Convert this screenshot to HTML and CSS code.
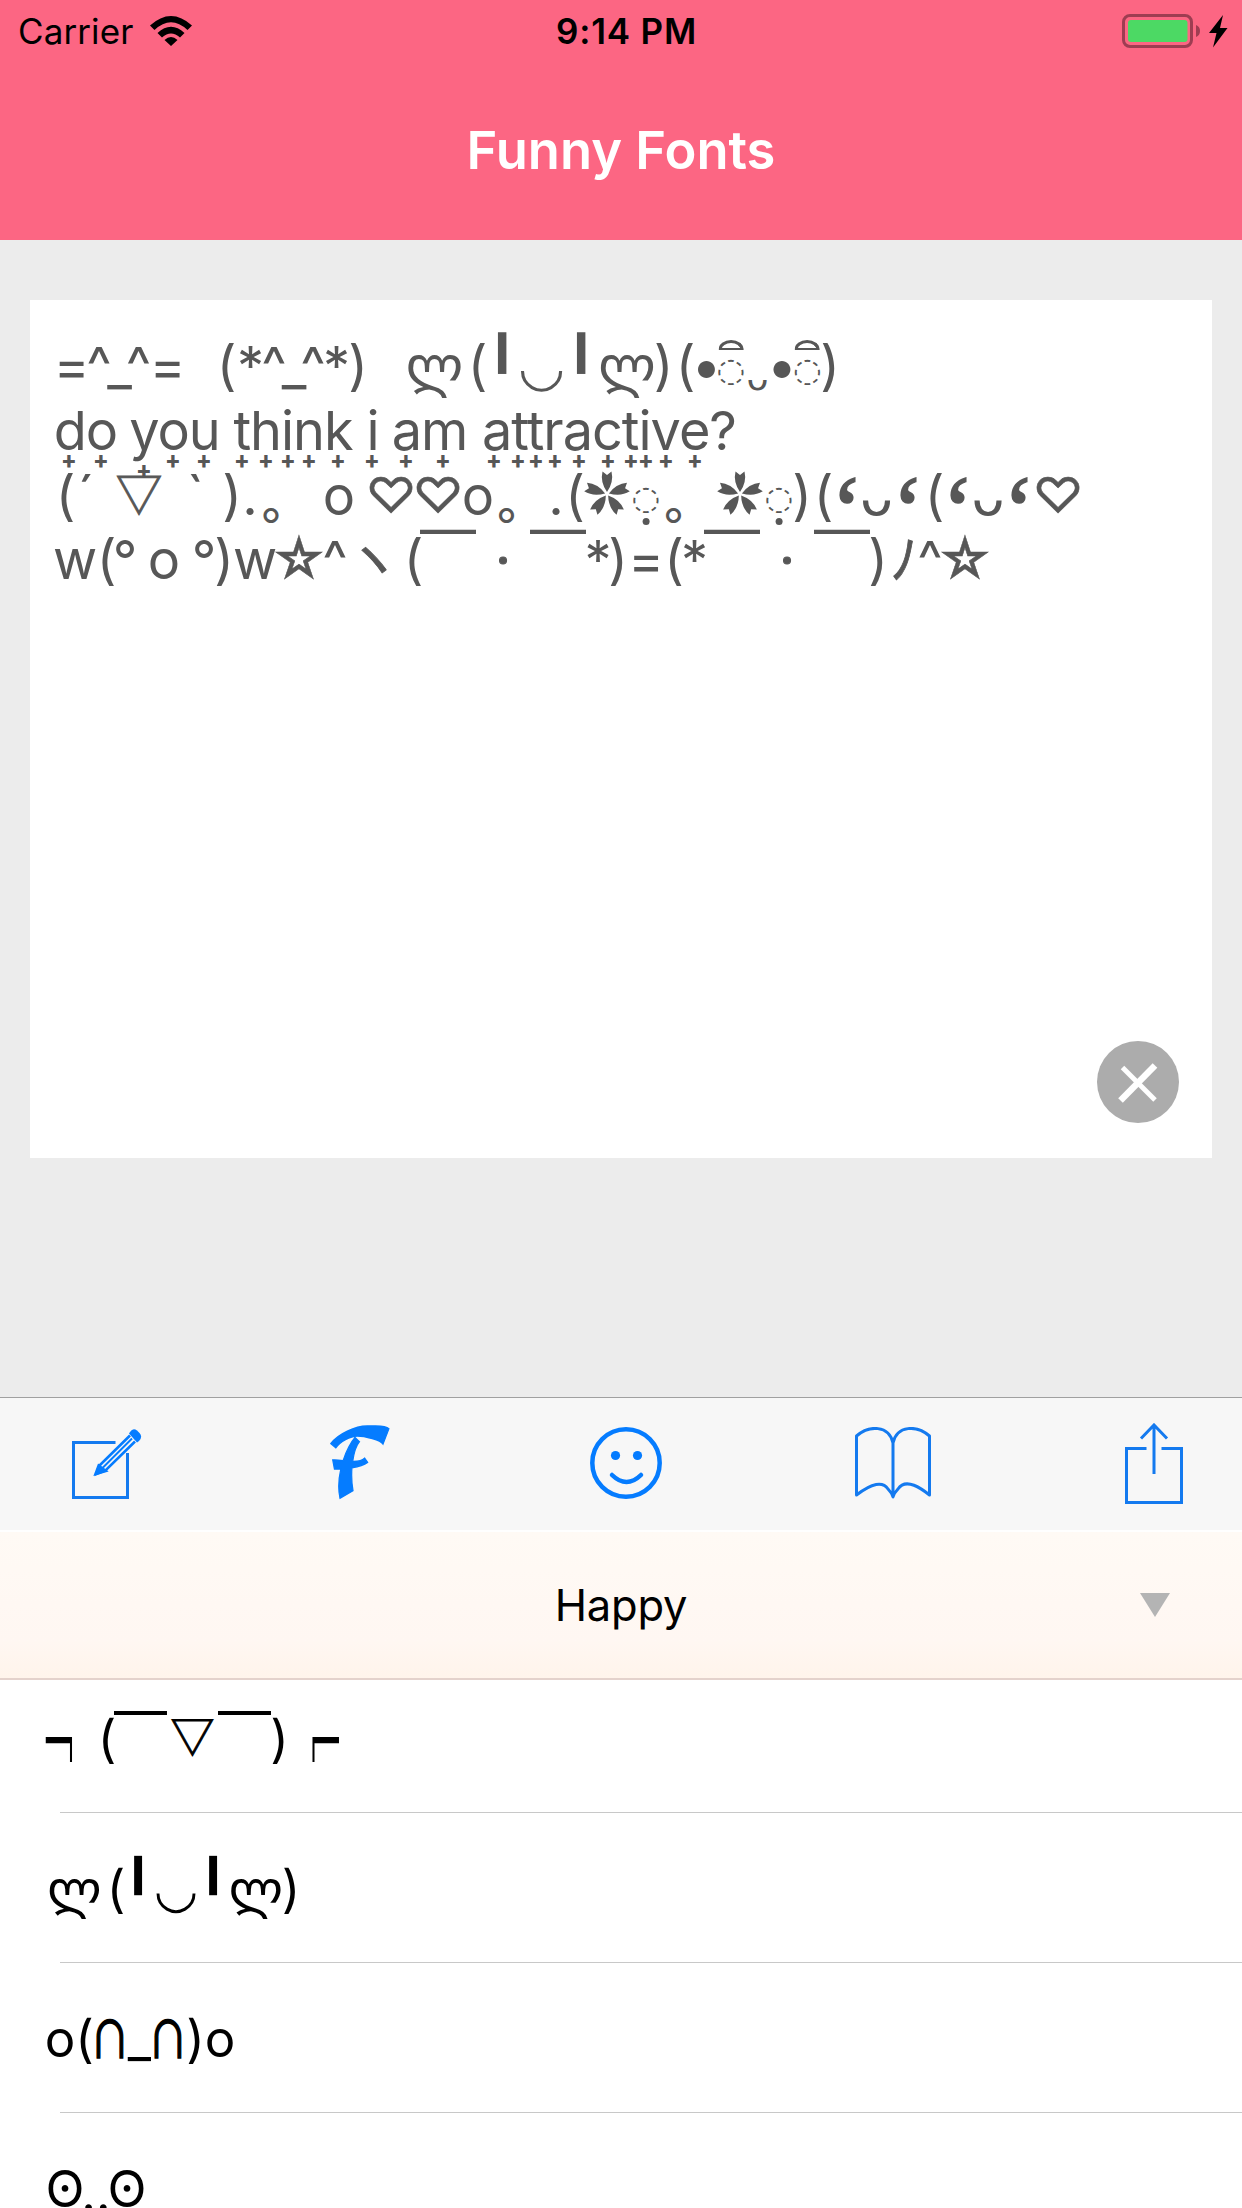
FILE: index.html
```html
<!DOCTYPE html>
<html lang="en">
<head>
<meta charset="utf-8">
<title>Funny Fonts</title>
<link rel="stylesheet" href="styles.css">
</head>
<body>
<header class="top">
  <div class="status">
    <div class="carrier"><span>Carrier</span>
      <svg class="wifi" viewBox="0 0 42 30"><path d="M0 9.500Q21-9.500 42 9.500L37.500 14Q21-1.500 4.500 14ZM7.500 17Q21 4.500 34.500 17L30 21.500Q21 13.500 12 21.500ZM14.500 24Q21 18 27.500 24L21 30Z"/></svg>
    </div>
    <div class="time">9:14 PM</div>
    <svg class="battery" viewBox="0 0 108 34"><rect x="1.500" y="1.500" width="68" height="31" rx="6.500" fill="none" stroke="#9e3d52" stroke-width="3"/><rect x="6" y="6" width="59.500" height="22" rx="3" fill="#4cd964"/><path d="M74 11q4 1.500 4 6t-4 6z" fill="#9e3d52"/><path d="M101 1L87 19h7.500L91 33.500 105.500 14H98Z"/></svg>
  </div>
  <h1 class="title">Funny Fonts</h1>
</header>
<main class="stage">
  <section class="editor">
    <div class="line l1"><span>=</span><span>^</span><span>_</span><span>^</span><span>=</span><span>(</span><span>*</span><span>^</span><span>_</span><span>^</span><span>*</span><span>)</span><span class="geo">ლ</span><span>(</span><span class="bar">╹</span><span class="smile">◡</span><span class="bar">╹</span><span class="geo">ლ</span><span>)</span><span>(</span><span class="dot">•</span><span class="ring hat">◌</span><span class="lip">ᴗ</span><span class="dot">•</span><span class="ring hat">◌</span><span>)</span></div>
    <div class="line words"><span>do</span><span>you</span><span>think</span><span>i</span><span>am</span><span>attractive?</span></div>
    <div class="line marks"><span>+</span><span>+</span><span class="low">+</span><span>+</span><span>+</span><span>+</span><span>+</span><span>+</span><span>+</span><span>+</span><span>+</span><span>+</span><span>+</span><span>+</span><span>+</span><span>+</span><span>+</span><span>+</span><span>+</span><span>+</span><span>+</span><span>+</span><span>+</span></div>
    <div class="line l3"><span>(</span><span>´</span><span class="tri">▽</span><span>`</span><span>)</span><span>.</span><span class="maru">◦</span><span>o</span><span class="heart">♡</span><span class="heart">♡</span><span>o</span><span class="maru">◦</span><span>.</span><span>(</span><svg class="flower" viewBox="-23 -23 46 46"><use href="#petal"/><use href="#petal" transform="rotate(72)"/><use href="#petal" transform="rotate(144)"/><use href="#petal" transform="rotate(216)"/><use href="#petal" transform="rotate(288)"/></svg><span class="ring under">◌</span><span class="maru">◦</span><svg class="flower" viewBox="-23 -23 46 46"><defs><path id="petal" d="M0-2Q-7-12-4.500-22.500L0-19 4.500-22.500Q7-12 0-2Z"/></defs><use href="#petal"/><use href="#petal" transform="rotate(72)"/><use href="#petal" transform="rotate(144)"/><use href="#petal" transform="rotate(216)"/><use href="#petal" transform="rotate(288)"/></svg><span class="ring under">◌</span><span>)</span><span>(</span><span class="quote">‘</span><span class="u">ᴗ</span><span class="quote">‘</span><span>(</span><span class="quote">‘</span><span class="u">ᴗ</span><span class="quote">‘</span><span class="heart">♡</span></div>
    <div class="line l4"><span>w</span><span>(</span><span>°</span><span>o</span><span>°</span><span>)</span><span>w</span><span class="star">☆</span><span>^</span><span class="jp">ヽ</span><span>(</span><span class="jp macron">￣</span><span class="mid">·</span><span class="jp macron">￣</span><span>*</span><span>)</span><span>=</span><span>(</span><span>*</span><span class="jp macron">￣</span><span class="mid">·</span><span class="jp macron">￣</span><span>)</span><span class="jp">ﾉ</span><span>^</span><span class="star">☆</span></div>
    <button class="clear" aria-label="Clear"><svg viewBox="0 0 82 82"><circle cx="41" cy="41" r="41" fill="#acacac"/><path d="M25.500 26.500L58 59" stroke="#fff" stroke-width="5"/><path d="M58 24.500L23.500 59.500" stroke="#fff" stroke-width="6.500"/></svg></button>
  </section>
</main>
<nav class="tools">
  <svg class="edit" viewBox="0 0 70 72"><path d="M43.500 15.500H1.500V70.500H55.500V26" fill="none" stroke="#147aef" stroke-width="3"/><path d="M58 8.500L27.500 38.500l-3 8.500 9-3.500L63 14.500" fill="none" stroke="#057cff" stroke-width="2.600"/><path d="M60 11.500L30 41.500M26.500 38l8 6-11.500 3.500Z" fill="#057cff" stroke="#057cff" stroke-width="2"/><path d="M58 5q3-4.500 7-1.500l2.500 2.500q3.500 4-.5 8l-2 1.500L57 6.500Z" fill="#057cff"/></svg>
  <span class="script">𝓕</span>
  <svg class="face" viewBox="0 0 72 72"><circle cx="36" cy="36" r="33.700" fill="none" stroke="#057cff" stroke-width="4.500"/><circle cx="25.500" cy="28.500" r="4.600" fill="#057cff"/><circle cx="47.500" cy="28.500" r="4.600" fill="#057cff"/><path d="M22 48q14.500 14 29 0" fill="none" stroke="#057cff" stroke-width="4.500" stroke-linecap="round"/></svg>
  <svg class="book" viewBox="0 0 76 72"><path d="M38 70V16M38 16C34-2 14-2 1.500 9V68Q25 50 33 62 37 66 38 70 39 66 43 62C51 50 67 62 74.500 68V9C62-2 42-2 38 16" fill="none" stroke="#147aef" stroke-width="3" stroke-linejoin="round"/></svg>
  <svg class="share" viewBox="0 0 58 82"><path d="M21.500 25.500H1.500V79.500H56.500V25.500H36.500M29 2V51M16 15.500L29 2 42 15.500" fill="none" stroke="#147aef" stroke-width="3"/></svg>
</nav>
<div class="category"><span>Happy</span><svg class="arrow" viewBox="0 0 30 24"><path d="M0 0H30L15 24Z" fill="#b4b4b4"/></svg></div>
<ul class="list">
  <li><div class="line k1"><span class="corner">┑</span><span>(</span><span class="jp macron">￣</span><span class="tri">▽</span><span class="jp macron">￣</span><span>)</span><span class="corner">┍</span></div></li>
  <li><div class="line k2"><span class="geo">ლ</span><span>(</span><span class="bar">╹</span><span class="smile">◡</span><span class="bar">╹</span><span class="geo">ლ</span><span>)</span></div></li>
  <li><div class="line k3"><span>o</span><span>(</span><span class="cap">∩</span><span>_</span><span class="cap">∩</span><span>)</span><span>o</span></div></li>
  <li><div class="line k4"><span class="eye">ʘ</span><span class="dots">‥</span><span class="eye">ʘ</span></div></li>
</ul>
</body>
</html>
```
FILE: styles.css
```css
*, *::before, *::after { box-sizing: border-box; }
body { margin: 0; width: 1242px; height: 2208px; overflow: hidden; display: flex; flex-direction: column; background: #fff; color: #000; font-family: Inter, "DejaVu Sans", "Noto Sans CJK JP", sans-serif; }
svg { display: block; }

.top { height: 240px; flex: none; background: #fc6683; }
.status { height: 60px; padding: 1px 12px 0 18px; display: grid; grid-template-columns: 1fr auto 1fr; align-items: center; font-size: 35px; line-height: 60px; }
.carrier { display: flex; align-items: center; gap: 17px; letter-spacing: .1px; }
.wifi { width: 42px; height: 30px; margin-bottom: 1px; }
.time { font-weight: 600; letter-spacing: .8px; padding-left: 5px; }
.battery { width: 108px; height: 34px; justify-self: end; margin-bottom: 1px; }
.title { margin: 0; height: 180px; line-height: 181px; text-align: center; color: #fff; font-size: 52.5px; font-weight: 600; }

.stage { flex: none; height: 1157px; background: #ececec; padding: 60px 30px 0; }
.editor { position: relative; height: 858px; padding-top: 36px; background: #fff; color: #575757; font-size: 54px; }
.line { height: 64px; line-height: 64px; display: grid; white-space: pre; justify-items: start; align-items: start; }
.line > * { transform: translate(-50%, var(--dy, 0px)); position: relative; }
.l1 { --dy: -2px; padding-left: 41.5px; grid-template-columns: 27.5px 20.5px 19px 29px 59px 24px 23.5px 20px 19px 23.5px 21.5px 76.5px 43px 24.5px 39.5px 39.5px 46px 36.5px 22px 21px 24.5px 26.5px 24.5px 25.5px 22.5px 20px; }
.words { padding-left: 55.5px; letter-spacing: -1px; grid-template-columns: 89px 118.5px 79.5px 57px 179.5px 20px; --dy: -1px; }
.marks { height: 0; line-height: 20px; padding-left: 39px; grid-template-columns: 32px 43px 29px 31px 38px 24px 22px 21px 29px 34px 34px 37px 51px 24px 18px 19px 24px 29px 23px 15px 20px 29px 10px; font-size: 23px; font-weight: 800; --dy: -14px; }
.marks .low { --dy: -4px; }
.l3 { padding-left: 35.5px; grid-template-columns: 20.5px 53px 56.5px 36.5px 18px 21px 68px 52px 47px 40px 28.5px 49.5px 19px 32px 39px 27.5px 66.5px 39px 23px 21.5px 23.5px 29.5px 31.5px 26.5px 23.5px 30px 31px 39px 20px; }
.l4 { padding-left: 45px; grid-template-columns: 31.5px 18.5px 39px 40px 20px 31px 44px 36px 38px 40.5px 34.5px 55px 55px 40px 20px 28px 28px 20.5px 37.5px 55px 55px 36px 26px 26px 35px 20px; }
.ring { font-size: 33px; --dy: 1px; }
.hat::before { content: ""; position: absolute; left: 50%; top: 3px; width: 25px; height: 10px; margin-left: -12.5px; border: solid; border-width: 3px 3px 2px; border-radius: 13px 13px 0 0 / 10px 10px 0 0; }
.under::after { content: ""; position: absolute; left: 50%; top: 53px; width: 7px; height: 7px; margin-left: -3.5px; border-radius: 50%; background: currentColor; }
.lip { font-size: 36px; --dy: 9px; }
.l3 .quote { font-family: "Liberation Serif", serif; font-size: 98px; --dy: 14px; -webkit-text-stroke: 1.5px; }
.maru { font-size: 48px; --dy: 16px; }
.heart { font-size: 49px; -webkit-text-stroke: .6px; }
.star { -webkit-text-stroke: .5px; }
.jp { -webkit-text-stroke: .8px; }
.mid { -webkit-text-stroke: 1px; }
.macron { -webkit-text-stroke: 2px; }
.tri { font-family: "Noto Sans CJK JP"; font-size: .86em; --dy: -5px; -webkit-text-stroke: 1px; }
.line > .bar { transform: translateX(-50%) scaleY(1.3); transform-origin: 50% 0; margin-top: -4px; }
.flower { width: 46px; height: 46px; fill: #575757; --dy: 7px; }
.clear { position: absolute; left: 1067px; top: 741px; width: 82px; height: 82px; padding: 0; border: 0; background: none; }

.tools { flex: none; height: 133px; border-top: 1px solid #a0a0a0; background: #f7f7f7; display: flex; align-items: flex-start; justify-content: space-between; padding: 0 59px 0 72px; }
.edit { width: 70px; height: 72px; margin-top: 29px; }
.script { width: 60px; height: 130px; line-height: 130px; font-family: "DejaVu Math TeX Gyre", "DejaVu Serif", serif; font-size: 86px; color: #057cff; transform: translate(-17px, 6px) scaleX(.78); -webkit-text-stroke: 1.5px; }
.face { width: 72px; height: 72px; margin-top: 29px; }
.book { width: 76px; height: 72px; margin-top: 29px; }
.share { width: 58px; height: 82px; margin-top: 25px; }

.category { flex: none; height: 150px; border-top: 2px solid #fff; border-bottom: 2px solid #e4d2cc; background: linear-gradient(#fffaf5, #fff7f2 75%, #fff4eb); display: grid; grid-template-columns: 1fr auto 1fr; align-items: center; padding-right: 72px; font-size: 43.5px; letter-spacing: -.2px; }
.category span { grid-column: 2; padding-left: 72px; }
.arrow { width: 30px; height: 24px; justify-self: end; }

.list { list-style: none; margin: 0; padding: 0; font-size: 51px; }
.list li { height: 150px; padding-top: 27px; background: linear-gradient(#c8c8c8, #c8c8c8) 60px 132px / 1182px 1px no-repeat; }
.corner { font-family: "Noto Sans CJK JP"; clip-path: inset(0 0 8px 0); --dy: -1px; }
.line > .cap { font-family: "Noto Sans CJK JP"; transform: translate(-50%, -3px) scaleX(.78); -webkit-text-stroke: 1.5px; }
.dots { --dy: 4px; }
.k1 { padding-left: 71px; grid-template-columns: 36px 33.5px 52px 52px 35px 34px 30px; }
.k2 { padding-left: 74.5px; grid-template-columns: 41.5px 22px 38px 37px 43px 35px 30px; }
.k3 { padding-left: 60px; grid-template-columns: 24.5px 25.5px 29.5px 28.5px 27.5px 24.5px 30px; }
.k4 { padding-left: 65px; grid-template-columns: 31px 31px 30px; }
```
